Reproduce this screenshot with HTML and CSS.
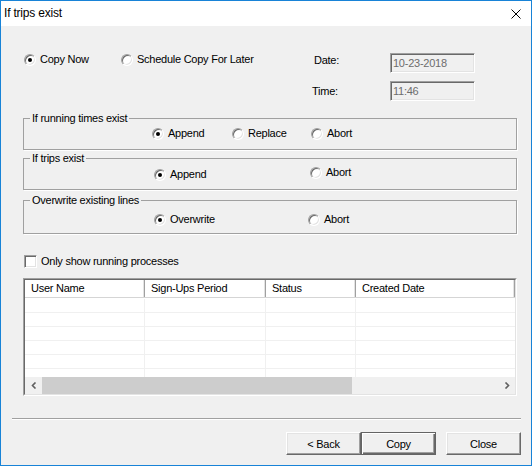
FILE: index.html
```html
<!DOCTYPE html>
<html>
<head>
<meta charset="utf-8">
<link rel="stylesheet" href="styles.css">
</head>
<body>
<div class="window">
  <div class="titlebar">
    <span class="title">If trips exist</span>
    <svg class="close" width="10" height="10" viewBox="0 0 10 10"><path d="M0.5 0.5 L9.5 9.5 M9.5 0.5 L0.5 9.5" stroke="#000" stroke-width="1" fill="none"/></svg>
  </div>
  <div class="content">
    <div class="top">
      <label class="opt on"><span class="rb"></span>Copy Now</label>
      <label class="opt"><span class="rb"></span>Schedule Copy For Later</label>
      <span class="lbl date-lbl">Date:</span>
      <div class="field">10-23-2018</div>
      <span class="lbl time-lbl">Time:</span>
      <div class="field time-field">11:46</div>
    </div>

    <div class="group g1">
      <div class="gtitle">If running times exist</div>
      <div class="grow r1">
        <label class="opt on"><span class="rb"></span>Append</label>
        <label class="opt"><span class="rb"></span>Replace</label>
        <label class="opt"><span class="rb"></span>Abort</label>
      </div>
    </div>

    <div class="group g2">
      <div class="gtitle">If trips exist</div>
      <div class="grow r2">
        <label class="opt on low"><span class="rb"></span>Append</label>
        <label class="opt"><span class="rb"></span>Abort</label>
      </div>
    </div>

    <div class="group g3">
      <div class="gtitle">Overwrite existing lines</div>
      <div class="grow r3">
        <label class="opt on"><span class="rb"></span>Overwrite</label>
        <label class="opt"><span class="rb"></span>Abort</label>
      </div>
    </div>

    <label class="check"><span class="cb"></span>Only show running processes</label>

    <div class="listview">
      <div class="lv-inner">
        <div class="lv-head">
          <div class="hc">User Name</div>
          <div class="hc">Sign-Ups Period</div>
          <div class="hc">Status</div>
          <div class="hc last">Created Date</div>
        </div>
        <div class="lv-body">
          <div class="lv-row"><div></div><div></div><div></div><div></div></div>
          <div class="lv-row"><div></div><div></div><div></div><div></div></div>
          <div class="lv-row"><div></div><div></div><div></div><div></div></div>
          <div class="lv-row"><div></div><div></div><div></div><div></div></div>
          <div class="lv-row"><div></div><div></div><div></div><div></div></div>
          <div class="lv-row"><div></div><div></div><div></div><div></div></div>
        </div>
        <div class="hscroll">
          <div class="sb-btn"><svg width="6" height="7" viewBox="0 0 6 7"><polyline points="4.5,0.5 1.5,3.5 4.5,6.5" fill="none" stroke="#606060" stroke-width="1.6"/></svg></div>
          <div class="sb-track"><div class="sb-thumb"></div></div>
          <div class="sb-btn"><svg width="6" height="7" viewBox="0 0 6 7"><polyline points="1.5,0.5 4.5,3.5 1.5,6.5" fill="none" stroke="#606060" stroke-width="1.6"/></svg></div>
        </div>
      </div>
    </div>

    <div class="separator"></div>

    <div class="buttons">
      <button class="btn back">&lt; Back</button>
      <button class="btn default">Copy</button>
      <button class="btn">Close</button>
    </div>
  </div>
</div>
</body>
</html>
```
FILE: styles.css
```css
html, body {
  margin: 0;
  padding: 0;
  background: #f0f0f0;
}

.window {
  width: 532px;
  height: 466px;
  box-sizing: border-box;
  border: 1px solid #1883d7;
  background: #f0f0f0;
  font-family: "Liberation Sans", Arial, sans-serif;
  font-size: 11px;
  letter-spacing: -0.25px;
  color: #000;
  display: flex;
  flex-direction: column;
  overflow: hidden;
}

.titlebar {
  height: 25px;
  background: #fff;
  display: flex;
  align-items: center;
  justify-content: space-between;
  padding: 0 10px 0 3px;
  flex: none;
}

.title {
  font-size: 12px;
  line-height: 25px;
  letter-spacing: -0.2px;
}

.close {
  display: block;
  margin-top: 1px;
}

.content {
  flex: 1;
  display: flex;
  flex-direction: column;
}

/* top row */
.top {
  display: grid;
  grid-template-columns: 97px 191px 78px 85px;
  grid-template-rows: 20px 20px;
  row-gap: 8px;
  padding: 27px 0 0 23px;
}

.opt {
  display: inline-flex;
  align-items: center;
  gap: 4px;
  height: 13px;
  line-height: 13px;
  white-space: nowrap;
  align-self: start;
}

.rb {
  width: 12px;
  height: 12px;
  box-sizing: border-box;
  border-radius: 50%;
  background: #fff;
  border: 1px solid;
  border-color: #a0a0a0 #ffffff #ffffff #a0a0a0;
  box-shadow: inset 1px 1px 0 #696969, inset -1px -1px 0 #e3e3e3;
  position: relative;
  flex: none;
}

.on .rb::after {
  content: "";
  position: absolute;
  left: 3px;
  top: 3px;
  width: 4px;
  height: 4px;
  border-radius: 50%;
  background: #000;
}

.lbl {
  line-height: 13px;
}

.date-lbl {
  align-self: start;
  padding: 1px 0 0 2px;
}

.time-lbl {
  align-self: center;
  grid-column: 3;
  grid-row: 2;
}

.field {
  height: 20px;
  box-sizing: border-box;
  border: 1px solid;
  border-color: #a0a0a0 #ffffff #ffffff #a0a0a0;
  box-shadow: inset 1px 1px 0 #696969, inset -1px -1px 0 #e3e3e3;
  background: #f0f0f0;
  color: #6d6d6d;
  line-height: 18px;
  padding-left: 2px;
}

.time-field {
  grid-column: 4;
  grid-row: 2;
}

/* group boxes */
.group {
  margin: 0 14px 0 22px;
  box-sizing: border-box;
  border: 1px solid #a0a0a0;
  box-shadow: 1px 1px 0 #fff;
}

.g1 { margin-top: 17px; height: 32px; }
.g2 { margin-top: 8px; height: 32px; }
.g3 { margin-top: 10px; height: 34px; }

.gtitle {
  width: max-content;
  margin: -7px 0 -6px 6px;
  padding: 0 2px;
  line-height: 13px;
  background: #f0f0f0;
}

.grow {
  display: grid;
  align-items: start;
}

.r1 {
  margin-top: 8px;
  padding-left: 128px;
  grid-template-columns: 80px 79px auto;
}

.r2 {
  margin-top: 7px;
  padding-left: 130px;
  grid-template-columns: 156px auto;
}

.r2 .low {
  margin-top: 2px;
}

.r3 {
  margin-top: 12px;
  padding-left: 130px;
  grid-template-columns: 154px auto;
}

/* checkbox */
.check {
  display: flex;
  align-items: center;
  gap: 4px;
  height: 13px;
  line-height: 13px;
  margin: 21px 0 0 23px;
}

.cb {
  width: 13px;
  height: 13px;
  box-sizing: border-box;
  background: #fff;
  border: 1px solid;
  border-color: #a0a0a0 #ffffff #ffffff #a0a0a0;
  box-shadow: inset 1px 1px 0 #696969, inset -1px -1px 0 #e3e3e3;
  flex: none;
}

/* list view */
.listview {
  margin: 10px 14px 0 22px;
  height: 118px;
  box-sizing: border-box;
  border: 1px solid;
  border-color: #a0a0a0 #ffffff #ffffff #a0a0a0;
}

.lv-inner {
  height: 100%;
  box-sizing: border-box;
  border: 1px solid;
  border-color: #696969 #e3e3e3 #e3e3e3 #696969;
  background: #fff;
  display: flex;
  flex-direction: column;
}

.lv-head,
.lv-row {
  display: grid;
  grid-template-columns: 120px 121px 90px 1fr;
}

.lv-head {
  height: 18px;
  box-sizing: border-box;
  border-bottom: 1px solid #d5d5d5;
  flex: none;
}

.hc {
  padding-left: 6px;
  line-height: 17px;
  border-right: 1px solid #a0a0a0;
  box-shadow: inset -1px 0 0 #e3e3e3;
}

.hc.last {
  border-right: 1px solid #a0a0a0;
}

.lv-body {
  flex: 1;
  overflow: hidden;
  padding-top: 1px;
}

.lv-row {
  height: 14px;
  box-sizing: border-box;
  border-bottom: 1px solid #f0f0f0;
}

.lv-row > div {
  border-right: 1px solid #f0f0f0;
}

.lv-row > div:last-child {
  border-right: none;
}

.hscroll {
  height: 17px;
  display: flex;
  background: #f0f0f0;
  flex: none;
}

.sb-btn {
  width: 17px;
  display: flex;
  align-items: center;
  justify-content: center;
  flex: none;
}

.sb-btn svg {
  display: block;
}

.sb-track {
  flex: 1;
  display: flex;
}

.sb-thumb {
  width: 310px;
  background: #cdcdcd;
}

/* separator + buttons */
.separator {
  margin: 22px 10px 0 11px;
  border-top: 1px solid #a0a0a0;
  border-bottom: 1px solid #ffffff;
}

.buttons {
  display: flex;
  justify-content: flex-end;
  margin-top: 12px;
  padding-right: 10px;
}

.btn {
  width: 75px;
  height: 23px;
  box-sizing: border-box;
  margin: 0;
  padding: 0;
  font-family: "Liberation Sans", Arial, sans-serif;
  font-size: 11px;
  letter-spacing: -0.25px;
  color: #000;
  background: #f0f0f0;
  border: 1px solid;
  border-color: #ffffff #696969 #696969 #ffffff;
  box-shadow: inset -1px -1px 0 #a0a0a0, inset 1px 1px 0 #e3e3e3;
  border-radius: 0;
}

.btn.default {
  border: 1px solid #646464;
  box-shadow: inset 1px 1px 0 #ffffff, inset -1px -1px 0 #696969, inset -2px -2px 0 #a0a0a0;
  margin-right: 10px;
}
```
